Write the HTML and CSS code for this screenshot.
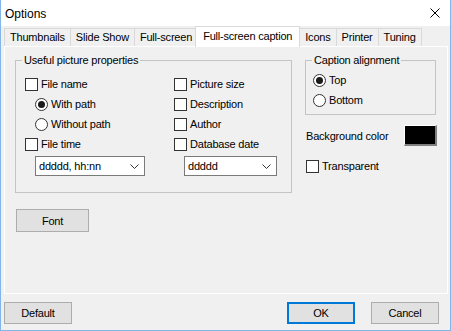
FILE: index.html
```html
<!DOCTYPE html>
<html lang="en">
<head>
    <meta charset="UTF-8">
    <title>Options</title>
    <link rel="stylesheet" href="styles.css">
</head>
<body>
    <div class="titlebar">
        <span class="title">Options</span>
        <svg class="close" width="10" height="10" viewBox="0 0 10 10">
            <path d="M0.5 0.5 L9.5 9.5 M9.5 0.5 L0.5 9.5" stroke="#000" stroke-width="1" fill="none"/>
        </svg>
    </div>

    <div class="tabs">
        <div class="tab">Thumbnails</div>
        <div class="tab">Slide Show</div>
        <div class="tab">Full-screen</div>
        <div class="tab active">Full-screen caption</div>
        <div class="tab">Icons</div>
        <div class="tab">Printer</div>
        <div class="tab">Tuning</div>
    </div>

    <div class="panel">
        <div class="top-row">
            <fieldset class="group props">
                <legend>Useful picture properties</legend>
                <div class="props-grid">
                    <div class="col">
                        <label class="row"><span class="check"></span>File name</label>
                        <label class="row indent"><span class="radio on"></span>With path</label>
                        <label class="row indent"><span class="radio"></span>Without path</label>
                        <label class="row"><span class="check"></span>File time</label>
                        <div class="combo wide">ddddd, hh:nn
                            <svg width="9" height="5" viewBox="0 0 9 5"><path d="M0.5 0.5 L4.5 4.5 L8.5 0.5" stroke="#333" fill="none"/></svg>
                        </div>
                    </div>
                    <div class="col">
                        <label class="row"><span class="check"></span>Picture size</label>
                        <label class="row"><span class="check"></span>Description</label>
                        <label class="row"><span class="check"></span>Author</label>
                        <label class="row"><span class="check"></span>Database date</label>
                        <div class="combo narrow">ddddd
                            <svg width="9" height="5" viewBox="0 0 9 5"><path d="M0.5 0.5 L4.5 4.5 L8.5 0.5" stroke="#333" fill="none"/></svg>
                        </div>
                    </div>
                </div>
            </fieldset>

            <div class="side">
                <fieldset class="group align">
                    <legend>Caption alignment</legend>
                    <div class="align-body">
                        <label class="row"><span class="radio on"></span>Top</label>
                        <label class="row"><span class="radio"></span>Bottom</label>
                    </div>
                </fieldset>
                <div class="bg-row">
                    <span>Background color</span>
                    <span class="swatch"></span>
                </div>
                <label class="row transparent"><span class="check"></span>Transparent</label>
            </div>
        </div>

        <button class="btn font-btn">Font</button>
    </div>

    <div class="footer">
        <button class="btn">Default</button>
        <div class="footer-right">
            <button class="btn default">OK</button>
            <button class="btn">Cancel</button>
        </div>
    </div>
</body>
</html>
```

FILE: styles.css
```css
* {
    box-sizing: border-box;
}

html, body {
    margin: 0;
}

body {
    width: 451px;
    height: 331px;
    background-color: #f0f0f0;
    border: 1px solid #83b5e9;
    border-top: none;
    font-family: "Liberation Sans", Arial, sans-serif;
    font-size: 11px;
    letter-spacing: -0.2px;
    color: #000;
    overflow: hidden;
}

.titlebar {
    height: 26px;
    background-color: #ffffff;
    display: flex;
    align-items: center;
    justify-content: space-between;
    padding: 0 10px 0 4px;
    letter-spacing: 0;
}

.title {
    font-size: 12px;
    margin-top: 1px;
}

.close {
    display: block;
}

/* tab strip */
.tabs {
    display: flex;
    align-items: flex-end;
    height: 20px;
    padding-left: 3px;
}

.tab {
    height: 18px;
    line-height: 17px;
    padding: 0 5px;
    border: 1px solid #d9d9d9;
    border-bottom: none;
    margin-right: -1px;
    white-space: nowrap;
}

.tab.active {
    height: 21px;
    line-height: 18px;
    margin: 0 -1px -1px -2px;
    padding: 0 7px;
    background-color: #ffffff;
    border-color: #d9d9d9;
    position: relative;
    z-index: 1;
}

.panel {
    height: 248px;
    margin: 0 2px 0 3px;
    border: 1px solid #ffffff;
    padding: 7px 10px 0 10px;
}

.top-row {
    display: flex;
    gap: 13px;
}

.group {
    margin: 0;
    padding: 0;
    border: 1px solid #c4c4c4;
    min-width: 0;
}

.group legend {
    margin-left: 6px;
    padding: 0 2px;
    line-height: 13px;
}

.props {
    width: 277px;
}

.props-grid {
    display: grid;
    grid-template-columns: 149px 1fr;
    padding: 7px 0 16px 9px;
}

.row {
    display: flex;
    align-items: center;
    height: 20px;
    white-space: nowrap;
}

.row.indent {
    padding-left: 10px;
}

.check {
    width: 13px;
    height: 13px;
    border: 1px solid #333333;
    background-color: #ffffff;
    margin-right: 3px;
    flex: none;
}

.radio {
    width: 13px;
    height: 13px;
    border: 1px solid #333333;
    border-radius: 50%;
    background-color: #ffffff;
    margin-right: 3px;
    flex: none;
    display: flex;
    align-items: center;
    justify-content: center;
}

.radio.on::after {
    content: "";
    width: 7px;
    height: 7px;
    border-radius: 50%;
    background-color: #1a1a1a;
}

.combo {
    height: 20px;
    margin: 2px 0 0 10px;
    border: 1px solid #7a7a7a;
    background-color: #ffffff;
    display: flex;
    align-items: center;
    justify-content: space-between;
    padding: 0 5px 0 3px;
}

.combo svg {
    display: block;
}

.combo.wide {
    width: 110px;
}

.combo.narrow {
    width: 93px;
}

.side {
    width: 131px;
    display: flex;
    flex-direction: column;
}

.align-body {
    padding: 3px 0 4px 7px;
}

.bg-row {
    display: flex;
    align-items: center;
    justify-content: space-between;
    margin: 10px -1px 0 1px;
    height: 21px;
}

.swatch {
    width: 33px;
    height: 21px;
    background-color: #000000;
    border-top: 1px solid #ffffff;
    border-left: 1px solid #ffffff;
    border-right: 2px solid #808080;
    border-bottom: 2px solid #808080;
}

.transparent {
    margin: 10px 0 0 1px;
}

.btn {
    font-family: "Liberation Sans", Arial, sans-serif;
    font-size: 11px;
    letter-spacing: -0.2px;
    color: #000;
    background-color: #e1e1e1;
    border: 1px solid #adadad;
    padding: 0;
    width: 68px;
    height: 22px;
}

.font-btn {
    display: block;
    width: 73px;
    height: 23px;
    margin: 16px 0 0 1px;
}

.footer {
    display: flex;
    justify-content: space-between;
    padding: 8px 11px 0 3px;
}

.footer-right {
    display: flex;
    gap: 16px;
}

.btn.default {
    border: 2px solid #0078d7;
}
```
